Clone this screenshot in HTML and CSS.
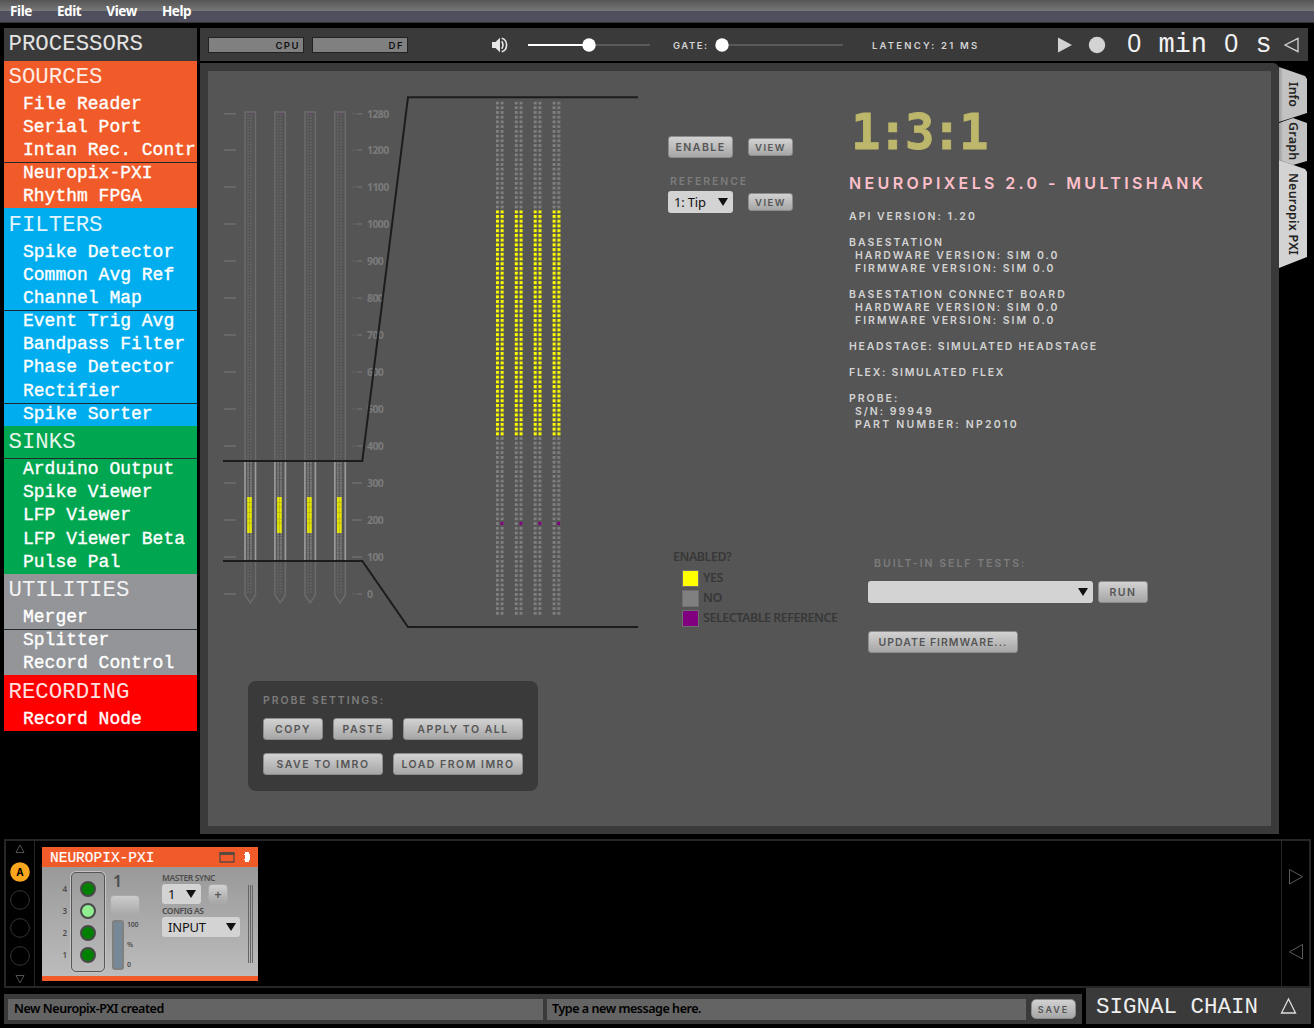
FILE: index.html
```html
<!DOCTYPE html>
<html lang="en">
<head>
<meta charset="utf-8">
<title>Open Ephys GUI</title>
<link rel="stylesheet" href="styles.css">
</head>
<body>
<nav class="menubar"><span>File</span><span>Edit</span><span>View</span><span>Help</span></nav>
<div class="workspace">
  <aside class="processors">
    <h2 class="head">PROCESSORS</h2>
    <section class="sources"><h3>SOURCES</h3><p>File Reader</p><p>Serial Port</p><p>Intan Rec. Contr</p><p class="rule">Neuropix-PXI</p><p>Rhythm FPGA</p></section>
    <section class="filters"><h3>FILTERS</h3><p>Spike Detector</p><p>Common Avg Ref</p><p>Channel Map</p><p class="rule">Event Trig Avg</p><p>Bandpass Filter</p><p>Phase Detector</p><p>Rectifier</p><p class="rule">Spike Sorter</p></section>
    <section class="sinks"><h3>SINKS</h3><p class="rule">Arduino Output</p><p>Spike Viewer</p><p>LFP Viewer</p><p>LFP Viewer Beta</p><p>Pulse Pal</p></section>
    <section class="utilities"><h3>UTILITIES</h3><p>Merger</p><p class="rule">Splitter</p><p>Record Control</p></section>
    <section class="recording"><h3>RECORDING</h3><p>Record Node</p></section>
  </aside>
  <main>
    <header class="controls">
      <div class="meter px">CPU</div><div class="meter px">DF</div>
      <svg class="speaker" width="18" height="18" viewBox="0 0 18 18"><path d="M1 6h3.500L9 1.700v14.600L4.500 12H1z" fill="#e6e6e6"/><path d="M10.700 5.200q2.600 3.800 0 7.600M10.700 2.200c6.500 1.800 6.500 11.800 0 13.600" fill="none" stroke="#e6e6e6" stroke-width="1.600"/></svg>
      <svg class="volume" width="124" height="16" viewBox="0 0 124 16"><path d="M1 8h122" stroke="#5a5a5a" stroke-width="2"/><path d="M1 8h61" stroke="#fff" stroke-width="2.200"/><circle cx="62" cy="8" r="6.700" fill="#fff"/></svg>
      <span class="px gate">GATE:</span>
      <svg class="gateslider" width="130" height="16" viewBox="0 0 130 16"><path d="M8 8h121" stroke="#5a5a5a" stroke-width="2"/><circle cx="8" cy="8" r="6.700" fill="#fff"/></svg>
      <span class="px latency">LATENCY: 21 MS</span>
      <svg class="transport" width="50" height="18" viewBox="0 0 50 18"><path d="M1 1.500v15L15 9z" fill="#d3d3d3"/><circle cx="40" cy="9" r="8.200" fill="#d3d3d3"/></svg>
      <span class="clock"><b>0</b> min <b>0</b> s</span>
      <svg width="16" height="16" viewBox="0 0 16 16"><path d="M1 8L14 1.300v13.400z" fill="none" stroke="#d3d3d3" stroke-width="1.300"/></svg>
    </header>
    <div class="stage">
      <div class="panel">
        <div class="probe-col">
          <svg width="460" height="570" viewBox="208 71 460 570">
            <defs>
              <pattern id="off" x="495.900" y="101.600" width="18.900" height="4.725" patternUnits="userSpaceOnUse"><path d="M0 0h2.900v2.900h-2.900zM4.700 0h2.900v2.900h-2.900z" fill="#808080"/></pattern>
              <pattern id="on" x="495.900" y="101.600" width="18.900" height="4.725" patternUnits="userSpaceOnUse"><path d="M0 0h3v3h-3zM4.700 0h3v3h-3z" fill="#ff0"/></pattern>
              <g id="shank">
                <path d="M245 112h10.500v483l-5.200 8-5.300-8z" fill="none" stroke="#6b6b6b" stroke-width="1.500"/>
                <path d="M248 114v480M251 114v480" stroke="#606060" stroke-width="2" stroke-dasharray="2 1"/>
                <path d="M245 462v98M255.500 462v98" stroke="#9b9b9b" stroke-width="1.600"/>
                <path d="M248 462v98M251 462v98" stroke="#777" stroke-width="2" stroke-dasharray="2 .5"/>
                <path d="M247.200 497h4.600v36h-4.600z" fill="#e8e800"/>
                <path d="M249.500 497v36M247 502.500h5M247 507h5M247 512.500h5M247 519h5M247 523h5" stroke="#a8a81c" stroke-width=".6"/>
                <path d="M250 113h2v2h-2z" fill="#6b4a6b"/>
              </g>
              <path id="tick" d="M224 0h12M358 0h4"/>
            </defs>
            <use href="#shank"/><use href="#shank" x="29.900"/><use href="#shank" x="59.900"/><use href="#shank" x="89.800"/>
            <g stroke="#6e6e6e" stroke-width="1.500">
              <use href="#tick" y="113.800"/><use href="#tick" y="150"/><use href="#tick" y="187"/><use href="#tick" y="224"/><use href="#tick" y="261"/><use href="#tick" y="298"/><use href="#tick" y="335"/><use href="#tick" y="372"/><use href="#tick" y="409"/><use href="#tick" y="446"/><use href="#tick" y="483"/><use href="#tick" y="520"/><use href="#tick" y="557"/><use href="#tick" y="594"/>
              <path d="M352 483h6M352 520h6M352 557h6"/>
              <path d="M352 113.800h6M352 150h6M352 187h6M352 224h6M352 261h6M352 298h6M352 335h6M352 372h6M352 409h6M352 446h6M352 594h6" stroke="#5f5f5f"/>
            </g>
            <g class="depth">
              <text x="367" y="117.600">1280</text><text x="367" y="153.800">1200</text><text x="367" y="190.800">1100</text><text x="367" y="227.800">1000</text><text x="367" y="264.800">900</text><text x="367" y="301.800">800</text><text x="367" y="338.800">700</text><text x="367" y="375.800">600</text><text x="367" y="412.800">500</text><text x="367" y="449.800">400</text><text x="367" y="486.800">300</text><text x="367" y="523.800">200</text><text x="367" y="560.800">100</text><text x="367" y="597.800">0</text>
            </g>
            <path d="M223 461h139.300L408 97.200h230M223 561h139.300L408 627h230" fill="none" stroke="#1c1c1c" stroke-width="2"/>
            <path d="M495.900 101.600h66v513.800h-66z" fill="url(#off)"/>
            <path d="M495.900 210.275h66v226.800h-66z" fill="#555"/>
            <path d="M495.900 210.275h66v226h-66z" fill="url(#on)"/>
            <path d="M500.500 522h3v3h-3zM519.400 522h3v3h-3zM538.300 522h3v3h-3zM557.200 522h3v3h-3z" fill="#800080"/>
          </svg>
          <div class="settings">
            <div class="px label">PROBE SETTINGS:</div>
            <div class="row"><button class="px w60">COPY</button><button class="px w60">PASTE</button><button class="px w120">APPLY TO ALL</button></div>
            <div class="row"><button class="px w120">SAVE TO IMRO</button><button class="px w130">LOAD FROM IMRO</button></div>
          </div>
        </div>
        <div class="mid-col">
          <div class="pair"><button class="px enable">ENABLE</button><button class="px view">VIEW</button></div>
          <div class="px label ref">REFERENCE</div>
          <div class="pair"><div class="select tip"><span>1: Tip</span><i></i></div><button class="px view">VIEW</button></div>
          <div class="legend">
            <div>ENABLED?</div>
            <div class="key"><b class="yes"></b>YES</div>
            <div class="key"><b class="no"></b>NO</div>
            <div class="key"><b class="selectable"></b>SELECTABLE REFERENCE</div>
          </div>
        </div>
        <div class="info-col">
          <div class="slot">1:3:1</div>
          <h1 class="px">NEUROPIXELS 2.0 - MULTISHANK</h1>
          <pre class="px info">API VERSION: 1.20

BASESTATION
<span>HARDWARE VERSION: SIM 0.0</span>
<span>FIRMWARE VERSION: SIM 0.0</span>

BASESTATION CONNECT BOARD
<span>HARDWARE VERSION: SIM 0.0</span>
<span>FIRMWARE VERSION: SIM 0.0</span>

<em>HEADSTAGE: SIMULATED HEADSTAGE</em>

<em>FLEX: SIMULATED FLEX</em>

PROBE:
<span>S/N: 99949</span>
<span class="part">PART NUMBER: NP2010</span></pre>
          <div class="tests">
            <div class="px label">BUILT-IN SELF TESTS:</div>
            <div class="testrow"><div class="select"><span></span><i></i></div><button class="px run">RUN</button></div>
            <button class="px update">UPDATE FIRMWARE...</button>
          </div>
        </div>
      </div>
      <div class="tabs"><div class="tab info-tab">Info</div><div class="tab graph-tab">Graph</div><div class="tab active-tab">Neuropix PXI</div></div>
    </div>
  </main>
</div>
<div class="chain">
  <div class="slots">
    <svg width="29" height="145" viewBox="0 0 29 145"><g fill="none" stroke="#343434"><path d="M10 11.500h8L14 4zM10 134.500h8L14 142z" stroke="#505050"/><circle cx="14" cy="59" r="9.300"/><circle cx="14" cy="87" r="9.300"/><circle cx="14" cy="115" r="9.300"/></g><circle cx="14" cy="31" r="9.800" fill="#f9a51e"/><text x="14" y="35" text-anchor="middle" class="slot-a">A</text></svg>
  </div>
  <article class="editor">
    <header><span>NEUROPIX-PXI</span>
      <svg width="34" height="14" viewBox="0 0 34 14"><path d="M1 3h14v9H1z" fill="none" stroke="#5b4a40" stroke-width="1.300"/><path d="M.5 2h15v3H.5z" fill="#5b4a40"/><path d="M26 2h4v2h1v6h-1v2h-4v-2h-1V9h1V5h-1V4h1z" fill="#fff" shape-rendering="crispEdges"/></svg>
    </header>
    <div class="editor-body">
      <div class="ports"><span>4</span><span>3</span><span>2</span><span>1</span></div>
      <div class="leds"><b></b><b class="lit"></b><b></b><b></b></div>
      <div class="probe-slot"><strong>1</strong><b></b><div class="fifo"><i></i><p><span>100</span><span>%</span><span>0</span></p></div></div>
      <div class="sync">
        <small>MASTER SYNC</small>
        <div class="syncrow"><div class="select one"><span>1</span><i></i></div><button class="plus">+</button></div>
        <small>CONFIG AS</small>
        <div class="select input"><span>INPUT</span><i></i></div>
      </div>
      <div class="grip"></div>
    </div>
  </article>
  <div class="scroll"><svg width="27" height="145" viewBox="0 0 27 145"><path d="M7.500 28.500v14.500L20.500 35.700zM20.500 103.500v14.500L7.500 110.800z" fill="none" stroke="#5a5a5a"/></svg></div>
</div>
<footer>
  <div class="messages"><div class="field f1">New Neuropix-PXI created</div><div class="field f2">Type a new message here.</div><button class="px save">SAVE</button></div>
  <div class="chain-toggle"><span>SIGNAL CHAIN</span><svg width="17" height="18" viewBox="0 0 17 18"><path d="M1.500 16h14L8.500 2z" fill="none" stroke="#ddd" stroke-width="1.300"/></svg></div>
</footer>
</body>
</html>
```
FILE: styles.css
```css
* { box-sizing: border-box; }
body { margin: 0; width: 1314px; height: 1028px; background: #000; overflow: hidden; font-family: "Noto Sans", sans-serif; display: flex; flex-direction: column; }
h1, h2, h3, p, pre { margin: 0; font-weight: 400; }
svg { display: block; flex: none; }
button { border: 1px solid #8c8c8c; border-radius: 3px; padding: 0; background: linear-gradient(#d2d2d2, #a6a6a6); color: #555; display: block; flex: none; white-space: nowrap; }
.px { font-family: Inter, sans-serif; font-size: 10.5px; font-weight: 600; letter-spacing: 1.5px; white-space: nowrap; }
.label { color: #7c7c7c; letter-spacing: 1.900px; }

.menubar { flex: none; height: 23px; background: linear-gradient(#555, #777 11px, #504f5d 11px, #504f5d 22px, #333 22px); display: flex; gap: 25px; padding-left: 10px; color: #fff; font-size: 13.5px; font-weight: 700; line-height: 22px; letter-spacing: -.4px; }

.workspace { flex: none; height: 811px; display: flex; padding: 5px 0 0 4px; gap: 3px; }
.processors { width: 193px; flex: none; color: #fff; font-family: "Liberation Mono", monospace; overflow: hidden; }
.processors h2, .processors h3 { font-size: 22.4px; line-height: 33px; height: 32.5px; padding-left: 4.500px; opacity: .88; }
.processors .head { background: #3a3a3a; opacity: 1; color: #e4e4e4; }
.processors .filters h3, .processors .recording h3 { line-height: 35px; }
.processors p { font-size: 18px; line-height: 23px; height: 23.1px; padding-left: 19px; white-space: pre; -webkit-text-stroke: .35px #fff; }
.processors .rule { border-top: 1.500px solid #1e2a30; line-height: 21px; }
.sources { background: #f15b29; } .filters { background: #00aeef; } .sinks { background: #00a650; } .utilities { background: #939598; } .recording { background: #f00; }

main { flex: 1; display: flex; flex-direction: column; gap: 2px; }
.controls { height: 33px; width: 1108px; background: #3a3a3a; display: flex; align-items: center; padding-left: 8px; }
.controls .px { font-size: 9.5px; position: relative; top: 1px; }
.controls .meter { top: 0; width: 96px; height: 16px; border: 1px solid #222; background: #808080; color: #111; text-align: right; line-height: 15px; padding-right: 3px; margin-right: 8px; flex: none; }
.speaker { margin-left: 75px; }
.volume { margin-left: 18px; }
.gate { margin-left: 22px; width: 41px; color: #d3d3d3; }
.latency { margin-left: 28px; width: 120px; color: #d3d3d3; }
.controls .latency { letter-spacing: 2.200px; }
.transport { margin-left: 65px; }
.clock { font: 27px "Liberation Mono", monospace; color: #f2f2f2; margin-left: 19px; width: 158px; white-space: nowrap; }
.clock b { display: inline-block; width: 16.2px; text-align: center; font: 25px "Liberation Sans", sans-serif; }
.stage { height: 771px; display: flex; }
.panel { width: 1079px; flex: none; background: #555; border: 8px solid #3a3a3a; border-top-right-radius: 6px; display: flex; }
.probe-col { width: 460px; flex: none; }
.depth text { font: 700 10.500px "Noto Sans", sans-serif; fill: #7b7b7b; letter-spacing: -.6px; }
.settings { width: 290px; height: 110px; margin: 40px 0 0 40px; background: #3a3a3a; border-radius: 8px; padding: 12px 0 0 15px; }
.settings .label { line-height: 15px; margin-bottom: 10px; }
.row { display: flex; gap: 10px; margin-bottom: 13px; }
.row button { height: 22px; }
.w60 { width: 60px; } .w120 { width: 120px; } .w130 { width: 130px; }

.mid-col { width: 181px; flex: none; padding-top: 65px; }
.pair { display: flex; align-items: center; gap: 15px; }
.pair .enable { width: 65px; height: 22px; }
.pair .view { width: 45px; height: 18px; font-size: 9.5px; }
.label.ref { margin-top: 16px; padding-left: 2px; line-height: 16px; height: 17px; }
.select { background: #d3d3d3; border-radius: 3px; color: #111; display: flex; align-items: center; justify-content: space-between; flex: none; font-size: 13px; padding: 0 5px 0 6px; letter-spacing: -.2px; }
.select i { width: 0; height: 0; border: 5px solid transparent; border-top: 8px solid #111; border-bottom: 0; }
.tip { width: 65px; height: 22px; }
.legend { margin: 335px 0 0 5px; color: #383838; font-size: 12.5px; font-weight: 600; line-height: 18px; white-space: nowrap; letter-spacing: -.48px; }
.key { display: flex; align-items: center; height: 20px; padding-left: 9px; gap: 4px; }
.legend .key:nth-child(2) { margin-top: 2px; }
.key b { width: 17px; height: 17px; border: 1px solid #6e6e6e; }
.yes { background: #ff0; } .no { background: #808080; } .selectable { background: #800080; }

.info-col { flex: 1; }
.slot { font: 700 49px/50px "DejaVu Sans Mono", monospace; letter-spacing: -2.500px; color: #bdb76b; -webkit-text-stroke: .8px #bdb76b; padding: 37px 0 0 2px; height: 98px; }
h1.px { font-size: 16px; line-height: 28px; height: 26px; color: #ffc0cb; letter-spacing: 3.370px; }
pre.info { white-space: pre; color: #d3d3d3; line-height: 13px; margin-top: 15px; letter-spacing: 2px; }
pre span { padding-left: 6px; }
pre em { font-style: normal; letter-spacing: 1.740px; }
pre .part { letter-spacing: 2.250px; }
.tests { padding: 126px 0 0 19px; }
.tests .label { padding-left: 6px; line-height: 14px; letter-spacing: 2px; }
.testrow { display: flex; gap: 5px; margin-top: 10px; }
.testrow .select { width: 225px; height: 22px; }
.run { width: 50px; height: 22px; }
.update { width: 150px; height: 22px; margin-top: 28px; letter-spacing: 1px; }

.tabs { padding-top: 4px; }
.tab { writing-mode: vertical-rl; width: 28px; text-align: center; line-height: 28px; font-size: 12.500px; font-weight: 600; color: #222; background: linear-gradient(90deg, #999, #c2c2c2 4px); }
.info-tab { height: 55px; clip-path: polygon(0 0, 26px 9px, 28px 12px, 28px 46px, 0 55px); }
.graph-tab { height: 52px; margin-top: -9px; letter-spacing: .2px; padding-top: 4px; clip-path: polygon(0 10px, 14px 5px, 28px 10px, 28px 48px, 14px 52px, 0 47px); }
.active-tab { height: 108px; margin-top: -5px; letter-spacing: .2px; background: #d3d3d3; clip-path: polygon(0 0, 26px 9px, 28px 12px, 28px 97px, 0 108px); }

.chain { flex: none; margin: 5px 0 0 4px; width: 1307px; height: 149px; border: 2px solid #262626; display: flex; }
.slots { width: 29px; border-right: 1px solid #262626; }
.slot-a { font: 700 10px Inter, sans-serif; }
.editor { width: 216px; height: 134px; margin: 6px 0 0 7px; background: #f15b29; }
.editor header { display: flex; justify-content: space-between; height: 20px; padding: 3px 5px 0 8px; color: #fff; font: 14.500px/17px "Liberation Mono", monospace; -webkit-text-stroke: .2px #fff; }
.editor-body { height: 109px; background: linear-gradient(#999, #bcbcbc); display: flex; color: #4c4c4c; }
.ports { width: 27px; padding: 11px 2px 0 0; text-align: right; font-size: 8px; font-weight: 600; display: flex; flex-direction: column; line-height: 22px; }
.leds { margin: 5px 0 0 2px; width: 34px; height: 100px; border: 1.500px solid #555; box-shadow: 0 0 0 1px #c4c4c4; border-radius: 5px; display: flex; flex-direction: column; align-items: center; padding: 8px 1px 0 0; gap: 6px; }
.leds b { width: 16px; height: 16px; border-radius: 50%; border: 2px solid #484848; background: #008000; flex: none; }
.leds .lit { background: #90ee90; }
.probe-slot { margin-left: 5px; width: 52px; }
.probe-slot strong { display: block; font-size: 16px; line-height: 20px; height: 28px; padding: 4px 0 0 3px; font-weight: 600; }
.probe-slot > b { display: block; width: 30px; height: 20px; border-radius: 4px; border: 1px solid #aaa; background: linear-gradient(#ccc, #aaa); }
.fifo { display: flex; margin: 5px 0 0 2px; }
.fifo i { width: 12px; height: 50px; border-radius: 3px; border: 2px solid #808080; background: #778899; }
.fifo p { display: flex; flex-direction: column; font-size: 7px; font-weight: 600; line-height: 10px; padding-left: 3px; gap: 10px; letter-spacing: -.3px; }
.sync { width: 86px; padding: 6px 0 0 0; }
.sync small { display: block; font-size: 8.500px; line-height: 10px; font-weight: 600; letter-spacing: -.4px; white-space: nowrap; }
.syncrow { display: flex; gap: 7px; margin: 1px 0 2px; }
.one { width: 39px; height: 20px; } .input { width: 78px; height: 20px; margin-top: 1px; padding-right: 4px; }
.plus { width: 20px; height: 20px; border-radius: 4px; border-color: #aaa; font: 600 13px "Noto Sans", sans-serif; line-height: 16px; }
.grip { width: 5px; height: 78px; margin-top: 18px; border-left: 1px solid #666; border-right: 1px solid #666; background: linear-gradient(90deg, transparent 1px, #666 1px, #666 2px, transparent 2px); }
.scroll { margin-left: auto; width: 28px; border-left: 1px solid #262626; }

footer { flex: none; height: 36px; display: flex; padding-left: 4px; }
.messages { width: 1078px; height: 30px; margin-top: 6px; background: #3a3a3a; display: flex; align-items: center; padding-left: 4px; }
.field { height: 21px; background: #646464; color: #000; font-size: 12.500px; font-weight: 600; line-height: 19px; padding-left: 6px; letter-spacing: -.45px; }
.f1 { width: 535px; margin-right: 4px; } .f2 { width: 479px; margin-right: 5px; padding-left: 5px; }
.save { width: 45px; height: 20px; border-radius: 5px; font-size: 9px; letter-spacing: 2px; }
.chain-toggle { margin-left: 4px; width: 225px; background: #3a3a3a; display: flex; align-items: center; gap: 20px; padding-left: 10px; color: #eee; font: 22.500px/36px "Liberation Mono", monospace; }
.chain-toggle span { width: 164px; white-space: nowrap; padding-top: 1px; }
```
